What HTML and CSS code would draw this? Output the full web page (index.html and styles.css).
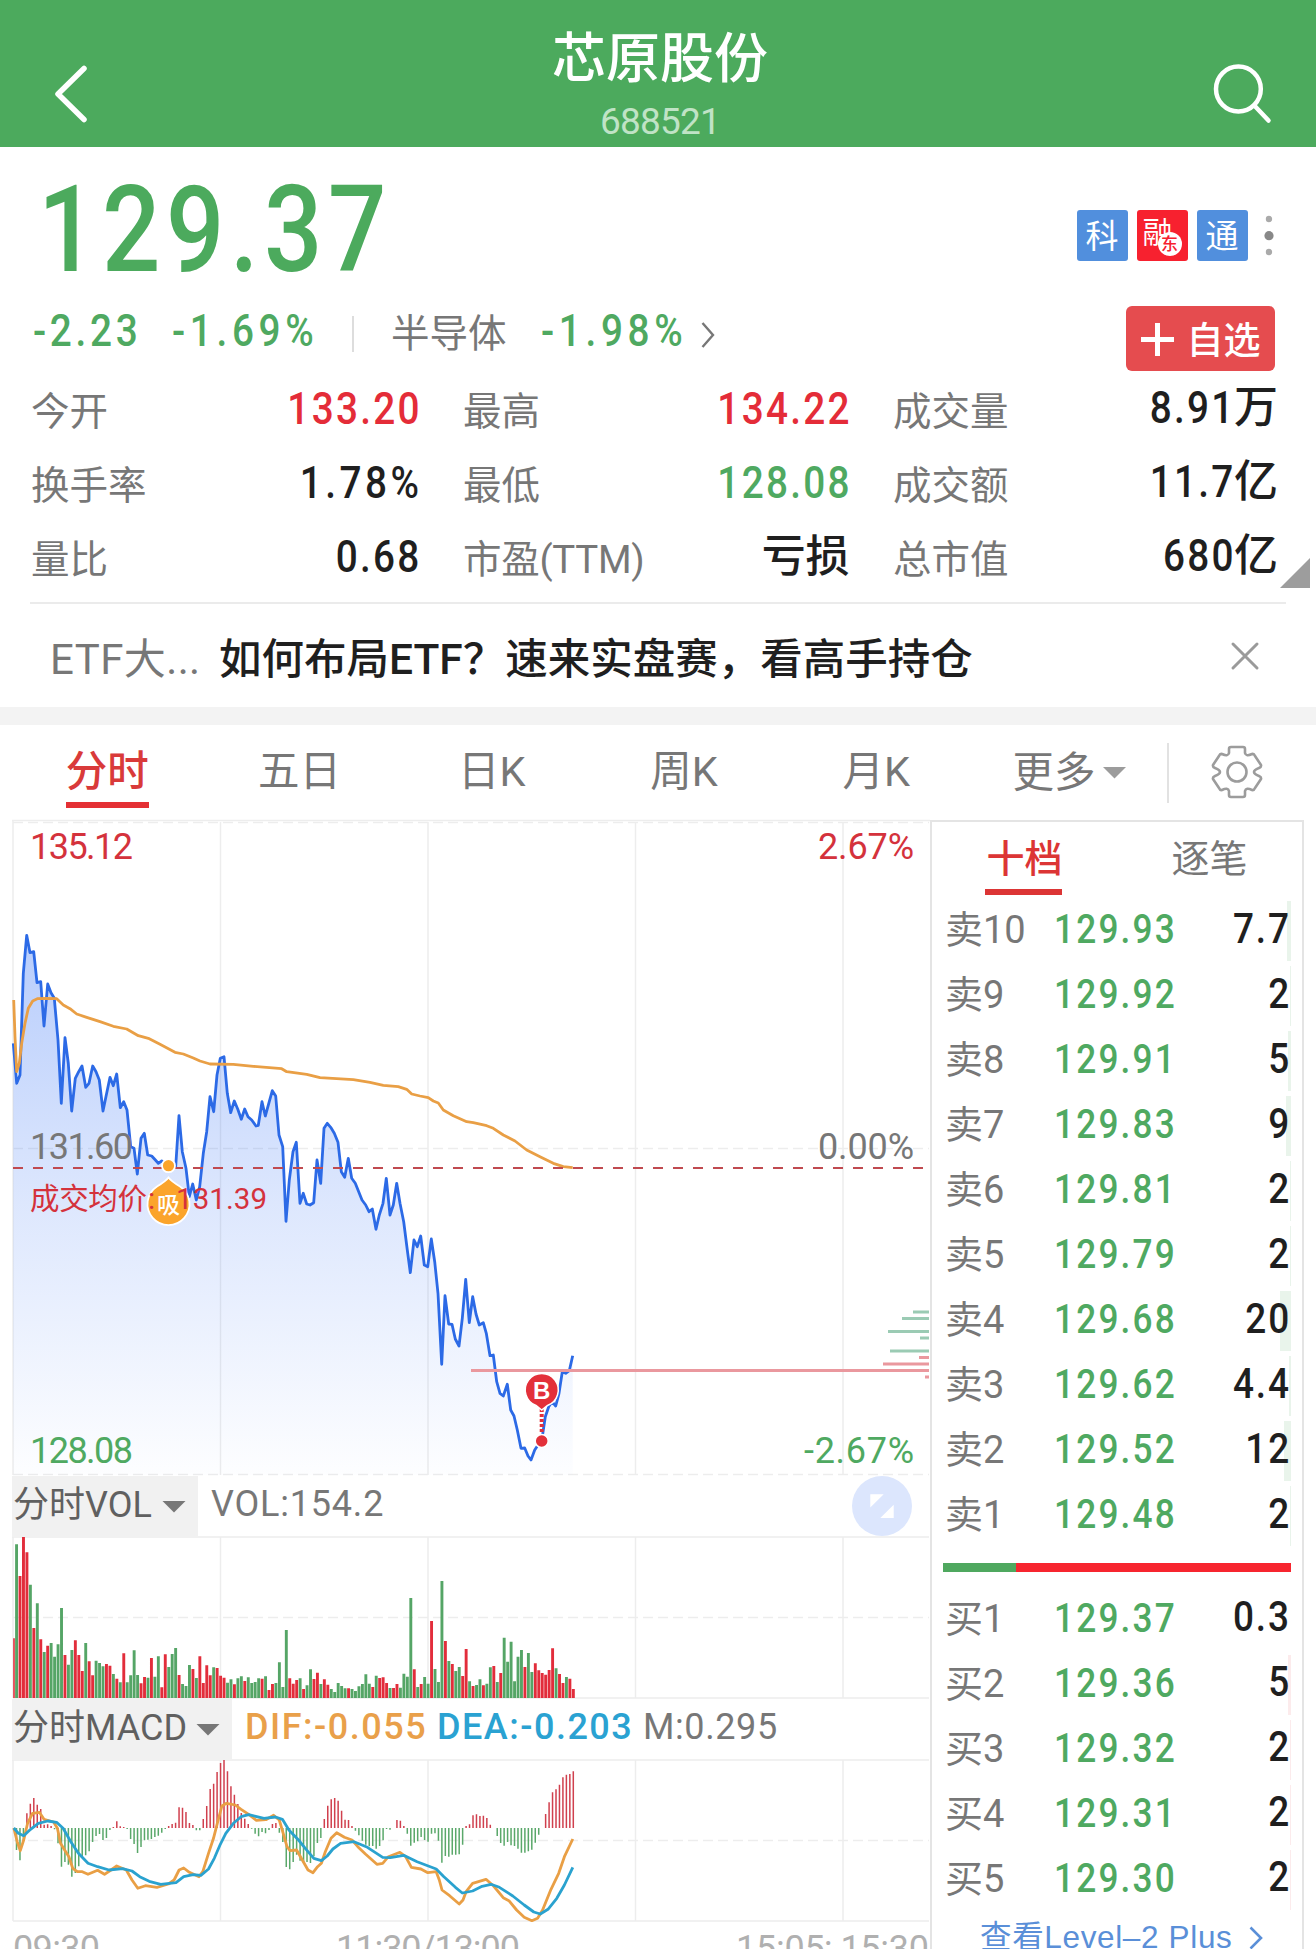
FILE: index.html
```html
<!DOCTYPE html>
<html lang="zh-CN">
<head>
<meta charset="utf-8">
<title>芯原股份 688521</title>
<link rel="stylesheet" href="styles.css">
</head>
<body>
<header class="topbar">
  <svg class="icon-back" viewBox="0 0 40 64"><path d="M32 6.500 6 32l26 25.500"/></svg>
  <div class="title"><h1>芯原股份</h1><span>688521</span></div>
  <svg class="icon-search" viewBox="0 0 64 64"><circle cx="27.400" cy="27" r="22.400"/><path d="M43.300 43.500 57.500 58.500"/></svg>
</header>

<section class="quote">
  <div class="quote-main">
    <div class="price"><span>129.37</span></div>
    <div class="change">
      <span class="num down c1"><u>-2.23</u></span>
      <span class="num down c2"><u>-1.69%</u></span>
      <i class="sep"></i>
      <span class="sector">半导体</span>
      <span class="num down c3"><u>-1.98%</u></span>
      <svg class="chev" viewBox="0 0 14 26"><path d="M1.500 1 12 13 1.500 25"/></svg>
    </div>
  </div>
  <div class="quote-side">
    <div class="badges">
      <b class="badge">科</b>
      <b class="badge red">融<em>东</em></b>
      <b class="badge">通</b>
      <svg class="dots" viewBox="0 0 12 51"><circle cx="6" cy="9" r="3.200"/><circle class="mid" cx="6" cy="25.700" r="4.600"/><circle cx="6" cy="42" r="3.200"/></svg>
    </div>
    <button class="fav"><svg viewBox="0 0 33 33"><path d="M0 16.500h33M16.500 0v33"/></svg><span>自选</span></button>
  </div>
</section>

<section class="stats">
  <div class="stat"><span>今开</span><b class="up"><u>133.20</u></b></div>
  <div class="stat"><span>最高</span><b class="up"><u>134.22</u></b></div>
  <div class="stat last"><span>成交量</span><b><u>8.91</u>万</b></div>
  <div class="stat"><span>换手率</span><b><u class="pct">1.78%</u></b></div>
  <div class="stat"><span>最低</span><b class="down"><u>128.08</u></b></div>
  <div class="stat last"><span>成交额</span><b><u>11.7</u>亿</b></div>
  <div class="stat"><span>量比</span><b><u>0.68</u></b></div>
  <div class="stat"><span class="ttm">市盈(TTM)</span><b>亏损</b></div>
  <div class="stat last"><span>总市值</span><b><u>680</u>亿</b></div>
  <i class="corner"></i>
</section>

<section class="promo">
  <span class="promo-tag">ETF大...</span>
  <span class="promo-text">如何布局ETF？速来实盘赛，看高手持仓</span>
  <svg class="close" viewBox="0 0 28 28"><path d="M2 2 26 26M26 2 2 26"/></svg>
</section>

<nav class="tabs">
  <a class="active">分时</a><a>五日</a><a>日K</a><a>周K</a><a>月K</a>
  <div class="more">更多<i></i></div>
  <i class="tabs-sep"></i>
  <svg class="gear" viewBox="-27 -27 54 54"><path d="M-8-23Q-8-25-6-25H6Q8-25 8-23V-19Q9-15 15-18Q17-18.500 18-16L24-7Q24.500-5 22-4Q17-2 17 0Q17 2 22 4Q24.500 5 24 7L18 16Q17 18.500 15 18Q9 15 8 19V23Q8 25 6 25H-6Q-8 25-8 23V19Q-9 15-15 18Q-17 18.500-18 16L-24 7Q-24.500 5-22 4Q-17 2-17 0Q-17-2-22-4Q-24.500-5-24-7L-18-16Q-17-18.500-15-18Q-9-15-8-19Z"/><circle r="9.500"/></svg>
</nav>

<main class="board">
  <div class="charts">
    <svg class="pane-price" viewBox="12 820 918 656">
      <defs><linearGradient id="fade" x1="0" y1="935" x2="0" y2="1475" gradientUnits="userSpaceOnUse"><stop offset="0" stop-color="#2c6bf5" stop-opacity=".34"/><stop offset=".5" stop-color="#2c6bf5" stop-opacity=".16"/><stop offset="1" stop-color="#2c6bf5" stop-opacity=".01"/></linearGradient></defs>
      <path class="grid" d="M12 820.500H930M13 820V1475M220.500 822V1475M428 822V1475M635.500 822V1475M843 822V1475"/>
      <path class="grid dash" d="M13 822.500H929M13 1148.500H929M13 1474.500H929"/>
      <path id="area" fill="url(#fade)"/>
      <path id="price" class="line blue"/>
      <path id="avg" class="line gold"/>
      <path class="ref" d="M13 1168H924"/>
      <g class="depth g"><path d="M913 1312H929M902 1318.500H929M888 1331.500H929M920 1338H929M890 1351H929"/></g>
      <g class="depth r"><path d="M919 1357.500H929M883 1364H929M471 1370.500H929M925 1377H929"/></g>
      <g class="drop"><circle cx="168.500" cy="1165.700" r="6.500"/><path d="M168.500 1177.500Q171 1181 180 1186.500A21 21 0 1 1 157 1186.500Q166 1181 168.500 1177.500Z"/></g>
      <text class="pin" x="168.500" y="1212.500" font-size="23">吸</text>
      <g class="buy"><path class="dots-line" d="M541.700 1409V1434"/><path class="body" d="M541.700 1410L536 1405.500A16.500 16.500 0 1 1 547.500 1405.500Z"/><circle cx="541.700" cy="1441" r="6.500"/></g>
      <text class="pin bs" x="541.700" y="1398.500" font-size="24">B</text>
      <g class="lbl">
        <text class="up" x="30" y="859" textLength="103">135.12</text>
        <text x="30" y="1159" textLength="103">131.60</text>
        <text class="down" x="30" y="1463" textLength="103">128.08</text>
        <text class="up" x="818" y="859" textLength="96">2.67%</text>
        <text x="818" y="1159" textLength="96">0.00%</text>
        <text class="down" x="804" y="1463" textLength="110">-2.67%</text>
      </g>
      <g class="avg-lbl"><text x="30" y="1208.500" textLength="117">成交均价</text><text x="148" y="1209">:</text><text x="176" y="1209" textLength="91">131.39</text></g>
    </svg>
    <div class="pane-head">
      <div class="picker">分时VOL<i></i></div>
      <span class="v-vol">VOL:154.2</span>
      <svg class="expand" viewBox="0 0 60 60"><circle cx="30" cy="30" r="30"/><path d="M18.300 18.200H31.700L18.300 31.400ZM41.700 28.700V42H28.300Z"/></svg>
    </div>
    <svg class="pane-sub" viewBox="12 1536 918 163">
      <path class="grid" d="M12 1537H929M13 1537V1698M220.500 1537V1698M428 1537V1698M635.500 1537V1698M843 1537V1698M13 1698H929"/>
      <path class="grid dash" d="M13 1617.500H929"/>
      <path id="volR" fill="#e22d3b"/><path id="volG" fill="#55a566"/>
    </svg>
    <div class="pane-head">
      <div class="picker wide">分时MACD<i></i></div>
      <span class="v-dif">DIF:-0.055</span><span class="v-dea">DEA:-0.203</span><span class="v-m">M:0.295</span>
    </div>
    <svg class="pane-sub macd" viewBox="12 1759 918 190">
      <path class="grid" d="M12 1760H929M13 1760V1921M220.500 1760V1921M428 1760V1921M635.500 1760V1921M843 1760V1921M13 1921H929"/>
      <path class="grid dash" d="M13 1840.500H929"/>
      <path id="macdR" fill="#d0404e"/><path id="macdG" fill="#5aa86a"/>
      <path id="dif" class="line gold"/><path id="dea" class="line cyan"/>
      <g class="time"><text x="13" y="1961" textLength="87">09:30</text><text x="336" y="1961" textLength="184">11:30/13:00</text><text x="736" y="1961" textLength="193">15:05; 15:30</text></g>
    </svg>
  </div>

  <aside class="book">
    <div class="book-tabs"><span class="active">十档</span><span>逐笔</span></div>
    <ul class="rows sell" id="sell"></ul>
    <div class="ratio"><i></i></div>
    <ul class="rows bid" id="bid"></ul>
    <a class="level2">查看Level–2 Plus<svg viewBox="0 0 14 24"><path d="M1.500 1.500 12 12 1.500 22.500"/></svg></a>
  </aside>
</main>
<script src="chart.js"></script>
</body>
</html>
```
FILE: styles.css
```css
* { box-sizing: border-box; margin: 0; padding: 0; }
body {
  width: 1316px; height: 1949px; overflow: hidden; background: #fff; color: #1f1f1f;
  font-family: Roboto, "Noto Sans CJK SC", sans-serif;
}
svg { display: block; flex: none; overflow: visible; fill: none; }
i, em { font-style: normal; display: block; }
u { text-decoration: none; display: inline-block; transform: scaleX(.88); transform-origin: 100% 0; }
.up { color: #e42c38; fill: #d4323c; }
.down { color: #4fa961; fill: #4fa961; }

.topbar { height: 147px; background: #4caa5d; display: flex; justify-content: space-between; align-items: flex-start; padding: 0 44px 0 52px; color: #fff; }
.topbar path, .topbar circle { stroke: #fff; stroke-linecap: round; stroke-linejoin: round; }
.icon-back { width: 40px; height: 64px; margin-top: 61.500px; stroke-width: 5.500; }
.icon-search { width: 64px; height: 64px; margin: 62px -3px 0 0; stroke-width: 4.500; }
.title { display: flex; flex-direction: column; align-items: center; padding-top: 30px; margin-left: 17px; }
.title h1 { font-size: 54px; line-height: 60px; font-weight: 500; }
.title span { font-size: 37px; line-height: 40px; letter-spacing: -.8px; color: #c0e3c6; margin-top: 12px; }

.quote { display: flex; justify-content: space-between; height: 225px; padding: 0 41.500px 0 33px; }
.price { height: 153px; padding-left: 5px; color: #4caa5d; }
.price span { display: inline-block; font-size: 121px; line-height: 167px; font-weight: 500; letter-spacing: 6.500px; transform: scaleX(.85); transform-origin: 0 0; }
.change { display: flex; align-items: center; height: 62px; }
.num { font-size: 44px; line-height: 62px; font-weight: 500; white-space: nowrap; }
.num u { transform-origin: 0 0; letter-spacing: 5.300px; }
.c1 { width: 139px; }
.c1 u { letter-spacing: 4.200px; }
.c2 { width: 180px; }
.sep { width: 2px; height: 36px; background: #ddd; margin: 6px 37px 0 0; }
.sector { font-size: 38.500px; line-height: 62px; color: #777; width: 150px; padding-top: 5px; }
.c3 { width: 160px; }
.chev { width: 14px; height: 26px; margin-top: 8px; stroke: #777; stroke-width: 2.400; }
.quote-side { display: flex; flex-direction: column; align-items: flex-end; padding-top: 63px; }
.badges { display: flex; gap: 9px; height: 51px; }
.badge { position: relative; width: 51px; height: 51px; border-radius: 3px; background: #518fdd; color: #fff; font-size: 33px; font-weight: 400; line-height: 53px; text-align: center; }
.badge.red { background: #f7212f; font-size: 30px; line-height: 46px; text-align: left; padding-left: 6px; }
.badge em { position: absolute; left: 21px; top: 22px; width: 24px; height: 24px; border-radius: 50%; background: #fff; color: #f7212f; font-size: 17px; line-height: 24px; font-weight: 500; text-align: center; }
.dots { width: 12px; height: 51px; margin-left: 6px; fill: #aaa; }
.dots .mid { fill: #888; }
.fav { display: flex; align-items: center; gap: 13px; width: 149px; height: 65px; margin-top: 45px; padding-left: 15px; border: 0; border-radius: 6px; background: #e54c4f; color: #fff; font: 500 37px/65px Roboto, "Noto Sans CJK SC", sans-serif; white-space: nowrap; }
.fav svg { width: 33px; height: 33px; margin-top: 2px; stroke: #fff; stroke-width: 5; }
.fav span { padding-top: 5px; }

.stats { position: relative; display: grid; grid-template-columns: 388px 386px 384.500px; grid-auto-rows: 74px; column-gap: 44px; height: 232px; margin: 0 30px; padding-left: 1px; border-bottom: 2px solid #ebebeb; }
.stat { display: flex; justify-content: space-between; line-height: 74px; white-space: nowrap; }
.stat span { font-size: 38.500px; color: #777; padding-top: 3px; }
.stat .ttm { letter-spacing: -.3px; }
.stat b { font-size: 44px; font-weight: 500; letter-spacing: -.4px; }
.stat u { letter-spacing: 2.600px; margin-right: -3px; }
.stat .pct { letter-spacing: 4px; margin-right: -4px; }
.stat.last u { margin-right: -2px; }
.stat.last b { margin-top: -1px; }
.corner { position: absolute; right: -24px; top: 186px; width: 30px; height: 30px; background: #9d9d9d; clip-path: polygon(100% 0, 100% 100%, 0 100%); }

.promo { display: flex; align-items: center; height: 121px; padding: 8px 57px 0 50px; border-bottom: 18px solid #f3f3f3; white-space: nowrap; }
.promo-tag { width: 169px; font-size: 42px; line-height: 80px; color: #777; letter-spacing: .4px; }
.promo-text { flex: 1; font-size: 42.500px; line-height: 80px; font-weight: 500; }
.close { width: 28px; height: 28px; margin-top: -7px; stroke: #9a9a9a; stroke-width: 3; stroke-linecap: round; }

.tabs { display: flex; height: 95px; padding-left: 11px; font-size: 41.500px; line-height: 94px; color: #777; white-space: nowrap; }
.tabs a { width: 192.300px; text-align: center; }
.tabs .active { position: relative; color: #d93a3a; font-weight: 500; }
.tabs .active::after { content: ""; position: absolute; left: 55px; top: 77px; width: 83px; height: 6px; background: #e43034; }
.more { display: flex; align-items: center; gap: 7px; width: 155px; padding-left: 40px; }
.more i, .picker i { flex: none; width: 24px; height: 12px; background: #9c9c9c; clip-path: polygon(0 0, 100% 0, 50% 100%); }
.tabs a, .more, .tabs-sep { flex: none; }
.tabs-sep { width: 2px; height: 60px; margin-top: 18px; background: #e2e2e2; margin-left: 40px; }
.gear { width: 54px; height: 54px; margin: 20px 0 0 41px; stroke: #9c9c9c; stroke-width: 2.600; stroke-linejoin: round; }

.board { display: flex; height: 1129px; }
.charts { width: 918px; margin-left: 12px; display: flex; flex-direction: column; }
.pane-price { width: 918px; height: 656px; }
.pane-sub { width: 918px; height: 163px; }
.pane-sub.macd { height: 190px; }
.grid { stroke: #ededed; stroke-width: 1.500; }
.grid.dash { stroke-dasharray: 10 5; }
.line { stroke-width: 2.800; stroke-linejoin: round; }
.blue { stroke: #2c6ae6; }
.gold { stroke: #e99f45; }
.cyan { stroke: #2aa2cf; }
.ref { stroke: #c04a50; stroke-width: 1.800; stroke-dasharray: 10 10; }
.depth { stroke-width: 3; }
.depth.g { stroke: #9bcbb4; }
.depth.r { stroke: #ea989e; }
.drop { fill: #fba42b; stroke: #fff; stroke-width: 1.800; }
.buy { fill: #e3303a; stroke: #fff; stroke-width: 1.500; }
.buy .dots-line { stroke: #e3303a; stroke-width: 4; stroke-dasharray: 3 2; }
.pin { fill: #fff; text-anchor: middle; font-weight: 500; }
.pin.bs { font-family: "Liberation Sans", sans-serif; font-weight: 700; }
.lbl { font-size: 36px; fill: #777; }
.avg-lbl { font-size: 29.500px; fill: #d4323c; }
.time { font-size: 36px; fill: #b0b0b0; }
.pane-head { display: flex; height: 60px; font-size: 36px; line-height: 57px; color: #777; white-space: nowrap; }
.picker { display: flex; align-items: center; justify-content: space-between; width: 186px; height: 60px; padding: 0 12px 1px 1px; background: #f1f1f1; color: #606060; }
.picker.wide { width: 220px; }
.picker i { background: #777; margin-top: 2px; }
.v-vol { letter-spacing: .8px; margin-left: 13px; flex: 1; }
.expand { width: 60px; height: 60px; margin-right: 18px; fill: #fff; }
.expand circle { fill: #dce6fd; }
.v-dif, .v-dea { letter-spacing: 1.500px; font-weight: 500; }
.v-dif { width: 192px; margin-left: 13px; color: #e9a04a; }
.v-dea { width: 206px; color: #2aa2d2; }
.v-m { letter-spacing: .6px; }

.book { width: 374px; border: 2px solid #e4e4e4; border-bottom: 0; position: relative; }
.book-tabs { display: flex; height: 79px; font-size: 38px; line-height: 74px; color: #777; }
.book-tabs span { position: relative; width: 186px; text-align: center; }
.book-tabs .active { color: #dc3535; font-weight: 500; }
.book-tabs .active::after { content: ""; position: absolute; left: 53px; top: 67px; width: 77px; height: 6px; background: #dc3535; }
.rows { list-style: none; display: grid; grid-auto-rows: 60px; gap: 5px; padding: 0 11px; }
.rows li { position: relative; display: grid; grid-template-columns: 109px 1fr auto; align-items: center; line-height: 60px; padding: 0 4px 0 2px; }
.rows li::before { content: ""; position: absolute; right: 0; top: 0; width: var(--w); height: 60px; background: #e9f4eb; }
.rows.bid li::before { background: #fcebec; }
.rows span { font-size: 38px; color: #777; margin-top: -2px; }
.rows b { font-size: 40px; font-weight: 500; color: #4fa961; letter-spacing: 2.500px; margin-top: -2px; transform: scaleX(.88); transform-origin: 0 0; }
.rows em { position: relative; font-size: 42px; font-weight: 500; margin: -5px -4px 0 0; letter-spacing: 2.200px; transform: scaleX(.88); transform-origin: 100% 0; }
.ratio { height: 9px; margin: 16.500px 11px 18px; background: #f7252f; }
.ratio i { width: 73px; height: 9px; background: #4fa85f; }
.level2 { display: flex; margin-top: -3px; padding-left: 48px; font: 31.500px/60px "Liberation Sans", "Noto Sans CJK SC", sans-serif; color: #5a8fd8; white-space: nowrap; gap: 17px; letter-spacing: .65px; }
.level2 svg { width: 14px; height: 24px; margin-top: 19px; stroke: #5a8fd8; stroke-width: 2.600; }
```
FILE: chart.js
```js
const STEP = 207.5 / 60;
const ORIGIN = 13;
const set = (id, d) => document.getElementById(id).setAttribute('d', d);

// Series are stored as "x,y" pairs; each is mapped to pane coordinates.
function line(data, fx, fy) {
  return 'M' + data.trim().split(/\s+/).map(p => {
    const [x, y] = p.split(',').map(Number);
    return fx(x).toFixed(1) + ' ' + fy(y).toFixed(1);
  }).join('L');
}

const price = `40,700 50,820 60,795 70,490 80,376 90,428 101,425 111,518 122,515 132,648 143,522 153,548 163,565 174,690 184,880 195,683 205,760 215,903 226,805 236,785 246,768 257,832 267,820 278,768 288,785 298,810 309,903 319,855 330,802 340,827 350,792 361,893 371,875 381,900 392,1010 402,1015 412,1092 423,985 433,970 443,1035 455,1038 464,1048 475,1060 485,1053 495,1060 506,1066 516,1072 527,1070 537,917 547,1025 558,1075 568,1160 578,1122 589,1170 599,1130 610,1030 620,965 630,860 641,905 651,795 661,745 672,740 682,850 692,908 703,873 713,897 724,928 734,897 744,920 755,930 768,948 775,946 786,875 796,918 807,878 817,842 827,858 837,975 848,1010 858,1234 868,1110 879,1025 889,997 900,1180 910,1150 920,1182 930,1185 941,1178 951,1050 962,1120 972,955 982,940 992,952 1003,970 1014,997 1024,1085 1034,1102 1045,1045 1055,1105 1066,1120 1076,1145 1086,1170 1097,1185 1107,1205 1117,1197 1128,1258 1138,1215 1149,1180 1159,1105 1170,1215 1180,1185 1190,1120 1200,1180 1211,1235 1222,1320 1231,1388 1242,1290 1252,1310 1262,1278 1273,1365 1283,1370 1294,1287 1304,1355 1314,1450 1325,1663 1335,1457 1346,1542 1356,1543 1366,1587 1377,1608 1387,1525 1397,1408 1408,1538 1418,1460 1428,1512 1438,1545 1450,1538 1459,1570 1470,1637 1480,1635 1490,1715 1500,1750 1510,1758 1522,1723 1532,1800 1542,1818 1552,1860 1563,1915 1574,1914 1584,1938 1593,1950 1604,1920 1614,1905 1625,1892 1636,1820 1646,1790 1656,1775 1667,1788 1677,1750 1687,1685 1697,1690 1708,1682 1718,1637`;
const avg = `41,570 45,680 50,785 58,760 65,700 75,640 85,595 98,573 112,566 140,565 170,566 190,585 210,596 230,612 260,622 300,635 340,649 380,657 415,677 445,685 480,703 525,727 550,732 580,744 600,753 630,762 700,763 760,769 845,776 860,785 920,793 960,803 1060,809 1110,817 1150,826 1195,830 1220,838 1235,852 1260,858 1285,863 1300,873 1315,879 1330,900 1360,917 1400,935 1420,938 1460,947 1480,955 1510,975 1545,993 1580,1020 1620,1040 1660,1060 1690,1070 1718,1073`;
const px = x => x / 3, py = y => 810 + y / 3;
const pricePath = line(price, px, py);
set('price', pricePath);
set('area', pricePath + 'V1475H13Z');
set('avg', line(avg, px, py));

const dif = `36,414 45,455 53,482 62,450 72,400 85,370 103,367 115,388 140,396 150,415 158,460 170,482 180,500 190,535 202,545 215,545 230,553 255,541 273,553 290,540 305,528 330,540 345,570 360,595 380,587 410,592 440,582 455,570 468,540 480,534 495,547 520,560 530,545 545,490 558,445 568,400 580,348 592,340 615,345 630,358 650,373 670,391 695,389 715,376 730,390 740,430 750,470 758,482 775,480 790,510 805,540 818,548 830,530 840,520 850,485 865,445 880,428 900,442 920,450 935,470 955,492 985,523 1000,520 1015,500 1045,487 1060,500 1075,532 1100,537 1118,548 1140,545 1148,570 1155,600 1175,617 1200,642 1210,630 1218,605 1235,580 1270,568 1290,588 1315,623 1330,632 1350,660 1370,682 1390,692 1405,685 1418,660 1440,598 1460,550 1475,500 1497,447`;
const dea = `36,414 48,430 62,437 80,418 100,400 125,393 148,397 165,415 185,455 205,490 230,520 255,530 285,540 320,536 345,543 365,560 390,574 420,583 460,578 480,560 505,554 525,556 545,537 560,505 575,465 590,430 610,400 630,380 650,374 690,385 720,381 738,388 755,420 780,450 800,478 820,505 840,512 855,498 870,477 890,460 925,455 960,472 1000,502 1020,503 1055,496 1090,515 1140,537 1160,560 1190,592 1208,609 1235,603 1260,589 1283,583 1305,592 1340,618 1370,645 1395,666 1412,672 1432,658 1455,625 1475,585 1497,532`;
const mx = x => x / 2.6133, my = y => 1690 + y / 3;
set('dif', line(dif, mx, my));
set('dea', line(dea, mx, my));

// Volume: bar height in thirds of a pixel, with the tick direction.
const vol = `179r 461g 366r 483r 437r 340g 210r 284g 176r 138g 157r 165g 124g 161g 270g 129r 100g 144g 173r 129r 81r 165g 110r 68r 112g 105g 95g 102r 97r 72g 58r 47g 134r 47g 68g 143g 69g 44r 63r 61g 120r 64g 125g 32r 131r 93g 132g 150g 69r 42g 36g 99g 87r 60g 125r 45r 98r 68r 92g 90r 67r 61r 46g 56g 41r 59g 65g 51r 62g 45g 48g 59g 58r 65g 24r 42r 45g 107g 33g 204g 59r 43r 54r 59g 27r 38g 86g 57r 76r 42g 56r 40r 27g 18g 45g 36g 29g 29r 27g 21g 35g 42g 71g 43g 33r 67g 60r 62r 45r 30g 30r 42r 31g 73g 64g 300g 86r 33g 42r 63g 43g 231r 87g 48g 351g 171r 111g 102r 81g 93g 66r 147r 50g 36r 39g 56g 38r 43g 92g 96r 48g 75r 181g 109g 169g 50g 124g 144g 93r 135g 78g 104r 83r 75r 70r 84r 149r 89g 72r 45r 63g 58r 27r`;
const volPath = { r: '', g: '' };
vol.split(' ').forEach((v, i) => {
  const h = parseInt(v, 10) / 3;
  const w = i ? 2.9 : 1.6;
  const x = (i ? ORIGIN + i * STEP - 0.4 : ORIGIN) + 0.5 - (i ? w / 2 : 0.3);
  volPath[v.slice(-1)] += `M${x.toFixed(2)} 1698v${(-h).toFixed(1)}h${w}V1698Z`;
});
set('volR', volPath.r);
set('volG', volPath.g);

const macd = `0 -66 -97 -38 44 73 90 70 57 10 11 6 -4 -46 -116 -102 -110 -146 -135 -115 -90 -82 -70 -42 -24 -18 -36 -30 -6 3 20 5 3 -3 -33 -48 -75 -57 -37 -35 -33 -27 -23 -14 -3 6 12 16 62 61 48 15 9 -7 -7 27 66 117 133 168 195 204 170 125 100 72 45 28 12 -2 -17 -25 -12 -16 -6 12 15 -14 -42 -117 -124 -102 -80 -98 -104 -102 -105 -85 -45 -30 27 67 86 90 82 52 25 24 6 -8 -22 -38 -50 -55 -54 -62 -54 -37 -3 -5 0 24 22 6 -17 -53 -44 -40 -27 -36 -41 -17 -16 -38 -104 -84 -86 -80 -80 -79 -50 6 11 38 41 36 37 30 10 0 -24 -45 -53 -42 -52 -54 -62 -74 -74 -70 -65 -44 -20 0 42 77 107 116 130 152 160 162 170`;
let up = '', down = '';
macd.split(' ').map(Number).forEach((v, i) => {
  const d = `M${(ORIGIN + i * STEP - 0.7).toFixed(2)} 1828v${(-v / 3).toFixed(1)}h1.5V1828Z`;
  if (v > 0) up += d; else if (v < 0) down += d;
});
set('macdR', up);
set('macdG', down);

// Order book: label, price, quantity, depth bar width.
const sell = [['卖10','129.93','7.7',4],['卖9','129.92','2',1],['卖8','129.91','5',3],['卖7','129.83','9',5],['卖6','129.81','2',1],['卖5','129.79','2',1],['卖4','129.68','20',11],['卖3','129.62','4.4',2],['卖2','129.52','12',7],['卖1','129.48','2',1]];
const bid = [['买1','129.37','0.3',0],['买2','129.36','5',3],['买3','129.32','2',1],['买4','129.31','2',1],['买5','129.30','2',1]];
const rows = list => list.map(([l, p, q, w]) => `<li style="--w:${w}px"><span>${l}</span><b>${p}</b><em>${q}</em></li>`).join('');
document.getElementById('sell').innerHTML = rows(sell);
document.getElementById('bid').innerHTML = rows(bid);
```
